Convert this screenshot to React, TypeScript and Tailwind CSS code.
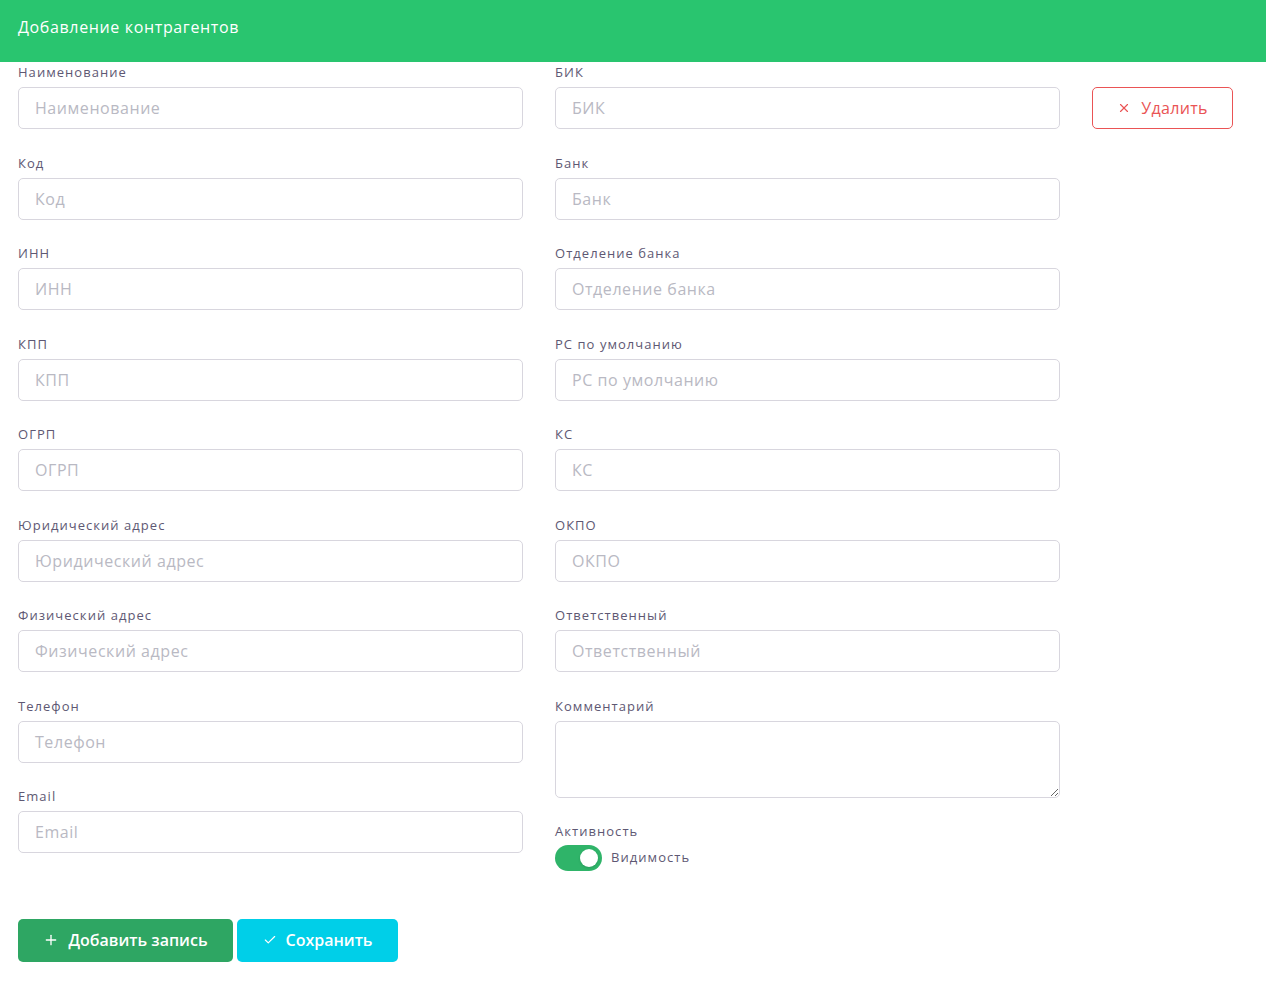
import { X, Plus, Check } from "lucide-react";

const left = ["Наименование", "Код", "ИНН", "КПП", "ОГРП", "Юридический адрес", "Физический адрес", "Телефон", "Email"];
const right = ["БИК", "Банк", "Отделение банка", "РС по умолчанию", "КС", "ОКПО", "Ответственный"];

function Field({ label }: { label: string }) {
  return (
    <div className="mb-[23.5px]">
      <label className="block h-[20px] text-[13px] leading-[20px] tracking-[0.08em] text-[#5e5873]">{label}</label>
      <div className="mt-[5px] flex h-[42px] items-center rounded-[5px] border border-[#d8d6de] px-4 text-[16px] tracking-[0.035em] text-[#b9b9c3]">
        {label}
      </div>
    </div>
  );
}

export default function App() {
  return (
    <div className="min-h-screen bg-white font-['Open_Sans',sans-serif]">
      <div className="h-[62px] bg-[#29c56f] px-[18px] pt-[17px] text-[16px] leading-[20px] tracking-[0.04em] text-white">
        Добавление контрагентов
      </div>
      <div className="flex px-[18px]">
        <div className="w-[505px]">
          {left.map((l) => (
            <Field key={l} label={l} />
          ))}
        </div>
        <div className="ml-[32px] w-[505px]">
          {right.map((l) => (
            <Field key={l} label={l} />
          ))}
          <label className="block h-[20px] text-[13px] leading-[20px] tracking-[0.08em] text-[#5e5873]">Комментарий</label>
          <textarea className="mt-[5px] block h-[77px] w-full rounded-[5px] border border-[#d8d6de] outline-none" />
          <div className="mt-[23px] h-[20px] text-[13px] leading-[20px] tracking-[0.08em] text-[#5e5873]">Активность</div>
          <div className="mt-[4px] flex items-center gap-[9px]">
            <div className="flex h-[26px] w-[47px] items-center justify-end rounded-full bg-[#2fb469] pr-[4px]">
              <div className="h-[18px] w-[18px] rounded-full bg-white shadow" />
            </div>
            <span className="text-[13px] tracking-[0.08em] text-[#5e5873]">Видимость</span>
          </div>
        </div>
        <div className="ml-[32px] pt-[25px]">
          <button className="flex h-[42px] w-[141px] items-center justify-center gap-[10px] rounded-[5px] border border-[#ea5455] text-[16px] tracking-[0.02em] text-[#ea5455]">
            <X size={14} strokeWidth={2} />
            Удалить
          </button>
        </div>
      </div>
      <div className="mt-[42px] flex gap-[4px] px-[18px]">
        <button className="flex h-[43px] w-[215px] items-center justify-center gap-[9px] rounded-[5px] bg-[#2ea663] text-[16px] font-semibold text-white">
          <Plus size={16} strokeWidth={2} />
          Добавить запись
        </button>
        <button className="flex h-[43px] w-[161px] items-center justify-center gap-[9px] rounded-[5px] bg-[#00cfe8] text-[16px] font-semibold text-white">
          <Check size={14} strokeWidth={2} />
          Сохранить
        </button>
      </div>
    </div>
  );
}
